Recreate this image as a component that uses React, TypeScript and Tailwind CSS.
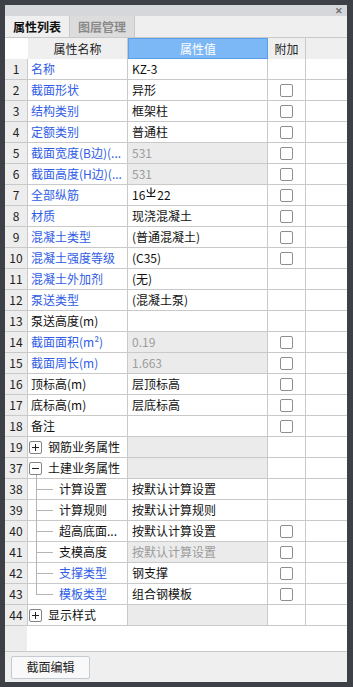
import React from "react"

type Row = {
  no: number
  name: string
  value?: string
  blue?: boolean
  grayCell?: boolean
  check?: boolean
  group?: "plus" | "minus"
  child?: "mid" | "last"
  rebar?: boolean
}

const rows: Row[] = [
  { no: 1, name: "名称", value: "KZ-3", blue: true },
  { no: 2, name: "截面形状", value: "异形", blue: true, check: true },
  { no: 3, name: "结构类别", value: "框架柱", blue: true, check: true },
  { no: 4, name: "定额类别", value: "普通柱", blue: true, check: true },
  { no: 5, name: "截面宽度(B边)(...", value: "531", blue: true, grayCell: true, check: true },
  { no: 6, name: "截面高度(H边)(...", value: "531", blue: true, grayCell: true, check: true },
  { no: 7, name: "全部纵筋", value: "", blue: true, check: true, rebar: true },
  { no: 8, name: "材质", value: "现浇混凝土", blue: true, check: true },
  { no: 9, name: "混凝土类型", value: "(普通混凝土)", blue: true, check: true },
  { no: 10, name: "混凝土强度等级", value: "(C35)", blue: true, check: true },
  { no: 11, name: "混凝土外加剂", value: "(无)", blue: true },
  { no: 12, name: "泵送类型", value: "(混凝土泵)", blue: true },
  { no: 13, name: "泵送高度(m)", value: "" },
  { no: 14, name: "截面面积(m²)", value: "0.19", blue: true, grayCell: true, check: true },
  { no: 15, name: "截面周长(m)", value: "1.663", blue: true, grayCell: true, check: true },
  { no: 16, name: "顶标高(m)", value: "层顶标高", check: true },
  { no: 17, name: "底标高(m)", value: "层底标高", check: true },
  { no: 18, name: "备注", value: "", check: true },
  { no: 19, name: "钢筋业务属性", group: "plus", grayCell: true },
  { no: 37, name: "土建业务属性", group: "minus", grayCell: true },
  { no: 38, name: "计算设置", value: "按默认计算设置", child: "mid" },
  { no: 39, name: "计算规则", value: "按默认计算规则", child: "mid" },
  { no: 40, name: "超高底面...", value: "按默认计算设置", child: "mid", check: true },
  { no: 41, name: "支模高度", value: "按默认计算设置", child: "mid", grayCell: true, check: true },
  { no: 42, name: "支撑类型", value: "钢支撑", child: "mid", blue: true, check: true },
  { no: 43, name: "模板类型", value: "组合钢模板", child: "last", blue: true, check: true },
  { no: 44, name: "显示样式", group: "plus", grayCell: true },
]

// 三级钢符号
const Rebar = () => (
  <svg width="10" height="11" viewBox="0 0 10 11" className="mx-[1px] -mt-[5px]">
    <path d="M5 0.5 V9.5 M1.2 2.5 C1.2 7.5 8.8 7.5 8.8 2.5 M0.5 9.5 H9.5" stroke="#111" strokeWidth="1.1" fill="none" />
  </svg>
)

const ExpandBox = ({ open }: { open: boolean }) => (
  <div className="relative w-[13px] h-[13px] border border-[#858585] rounded-[2px] bg-white shrink-0">
    <div className="absolute left-[2px] top-[5px] w-[7px] h-[1px] bg-[#222]" />
    {!open && <div className="absolute left-[5px] top-[2px] w-[1px] h-[7px] bg-[#222]" />}
  </div>
)

const TableRow = ({ r }: { r: Row }) => {
  const nameColor = r.blue ? "text-[#2f5ce6]" : "text-[#111]"
  const valueColor = r.grayCell ? "text-[#9c9c9c]" : "text-[#111]"
  return (
    <div className="flex h-[21px] border-b border-[#c9c9c9]">
      <div className="w-[23px] shrink-0 bg-[#ededed] border-r border-[#c9c9c9] flex items-center justify-center text-[#222]">
        {r.no}
      </div>
      <div className={`relative w-[100px] shrink-0 bg-white border-r border-[#c9c9c9] flex items-center ${nameColor}`}>
        {r.group ? (
          <>
            {r.group === "minus" && <div className="absolute left-[8px] top-[16px] w-[1px] h-[5px] bg-[#b4b4b4]" />}
            <div className="flex items-center pl-[1px] gap-[6px] text-[#111]">
              <ExpandBox open={r.group === "minus"} />
              <span>{r.name}</span>
            </div>
          </>
        ) : r.child ? (
          <>
            <div
              className={`absolute left-[8px] top-[-1px] w-[1px] bg-[#b4b4b4] ${r.child === "last" ? "h-[11px]" : "h-[21px]"}`}
            />
            <div className="absolute left-[8px] top-[10px] w-[17px] h-[1px] bg-[#b4b4b4]" />
            <span className="pl-[31px]">{r.name}</span>
          </>
        ) : (
          <span className="pl-[3px] whitespace-nowrap">{r.name}</span>
        )}
      </div>
      <div
        className={`w-[140px] shrink-0 border-r border-[#c9c9c9] flex items-center pl-[4px] ${
          r.grayCell ? "bg-[#ebebeb]" : "bg-white"
        } ${valueColor}`}
      >
        {r.rebar ? (
          <span className="flex items-center text-[#111]">
            16
            <Rebar />
            22
          </span>
        ) : (
          r.value
        )}
      </div>
      <div className="w-[38px] shrink-0 bg-white border-r border-[#c9c9c9] flex items-center justify-center">
        {r.check && <div className="w-[13px] h-[13px] border border-[#8e8e8e] rounded-[2px] bg-white" />}
      </div>
    </div>
  )
}

export default function App() {
  return (
    <div className="w-[353px] h-[687px] bg-[#3d4147] pt-[5px] pl-[5px] pr-[6px] pb-[5px] font-['Noto_Sans_CJK_SC',sans-serif] text-[12px] leading-none">
      <div className="h-full flex flex-col bg-[#efefef]">
        <div className="h-[11px] bg-[#d6d7da] flex items-center justify-end pr-[4px]">
          <span className="text-[9px] text-[#6e6e6e] font-bold leading-none">✕</span>
        </div>
        <div className="h-[22px] flex border-b border-[#c9c9c9] bg-[#efefef]">
          <div className="w-[65px] flex items-center justify-center border-r border-[#c9c9c9] text-[#111] font-semibold">
            属性列表
          </div>
          <div className="w-[65px] flex items-center justify-center bg-[#dcdcdc] border-r border-[#c9c9c9] text-[#8a8a8a] font-semibold">
            图层管理
          </div>
        </div>
        <div className="flex-1 flex flex-col bg-white">
          <div className="flex h-[21px] bg-[#efefef]">
            <div className="w-[23px] shrink-0 bg-white" />
            <div className="w-[100px] shrink-0 border-r border-[#c9c9c9] flex items-center justify-center text-[#222]">
              属性名称
            </div>
            <div className="w-[140px] shrink-0 bg-[#7db8f6] border border-[#5d9ee9] flex items-center justify-center text-white">
              属性值
            </div>
            <div className="w-[38px] shrink-0 border-r border-[#c9c9c9] flex items-center justify-center text-[#222]">
              附加
            </div>
          </div>
          {rows.map((r) => (
            <TableRow key={r.no} r={r} />
          ))}
          <div className="flex-1 flex">
            <div className="w-[22px] bg-[#ededed]" />
          </div>
        </div>
        <div className="h-[31px] border-t border-[#c9c9c9] flex items-center pl-[6px]">
          <button className="w-[79px] h-[23px] border border-[#c4cad2] rounded-[2px] bg-[#f9f9f9] text-[#222] text-[12px]">
            截面编辑
          </button>
        </div>
      </div>
    </div>
  )
}
